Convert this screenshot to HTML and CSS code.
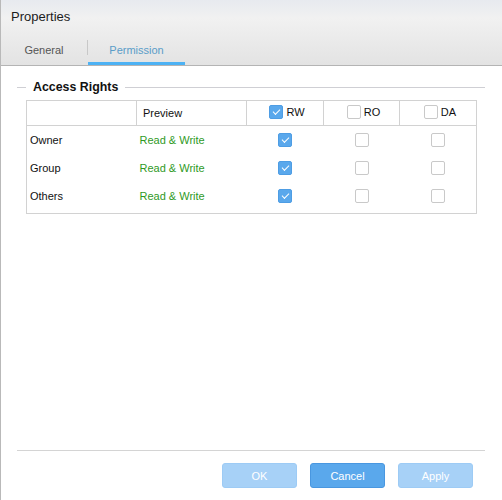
FILE: index.html
```html
<!DOCTYPE HTML>
<html lang="en">
<head>
  <meta charset="UTF-8">
  <meta name="viewport" content="width=device-width, initial-scale=1.0">
  <title>Properties</title>
  <link rel="stylesheet" href="styles.css">
</head>
<body>
  <div class="dialog">
    <!-- Title and tabs -->
    <div class="header">
      <div class="title">Properties</div>
      <div class="tabs">
        <div class="tab tab-general">General</div>
        <span class="tab-sep"></span>
        <div class="tab tab-permission active">Permission</div>
      </div>
    </div>

    <!-- Permission page -->
    <div class="content">
      <div class="legend">
        <span class="legend-line short"></span>
        <span class="legend-text">Access Rights</span>
        <span class="legend-line long"></span>
      </div>
      <table class="rights">
        <colgroup>
          <col class="col-name">
          <col class="col-preview">
          <col class="col-rw">
          <col class="col-ro">
          <col class="col-da">
        </colgroup>
        <thead>
          <tr>
            <th></th>
            <th>Preview</th>
            <th class="head-cell"><span class="head-check"><span class="box checked"></span>RW</span></th>
            <th class="head-cell"><span class="head-check"><span class="box"></span>RO</span></th>
            <th class="head-cell"><span class="head-check"><span class="box"></span>DA</span></th>
          </tr>
        </thead>
        <tbody>
          <tr>
            <td>Owner</td>
            <td class="preview">Read &amp; Write</td>
            <td class="check"><span class="box checked"></span></td>
            <td class="check"><span class="box"></span></td>
            <td class="check"><span class="box"></span></td>
          </tr>
          <tr>
            <td>Group</td>
            <td class="preview">Read &amp; Write</td>
            <td class="check"><span class="box checked"></span></td>
            <td class="check"><span class="box"></span></td>
            <td class="check"><span class="box"></span></td>
          </tr>
          <tr class="last">
            <td>Others</td>
            <td class="preview">Read &amp; Write</td>
            <td class="check"><span class="box checked"></span></td>
            <td class="check"><span class="box"></span></td>
            <td class="check"><span class="box"></span></td>
          </tr>
        </tbody>
      </table>
    </div>

    <!-- Buttons -->
    <div class="footer">
      <button class="btn btn-light">OK</button>
      <button class="btn btn-primary">Cancel</button>
      <button class="btn btn-light">Apply</button>
    </div>
  </div>
</body>
</html>
```

FILE: styles.css
```css
body {
  margin: 0;
  padding: 0;
  font-family: 'Liberation Sans', Arial, sans-serif;
  color: #222;
  background: #fff;
}
.dialog {
  width: 502px;
  height: 500px;
  display: flex;
  flex-direction: column;
  box-sizing: border-box;
  border-left: 1px solid #b9b9b9;
}

/* Header */
.header {
  height: 65px;
  border-bottom: 1px solid #b4b4b4;
  background: linear-gradient(#e7eaef 0, #f1f1f1 28%, #e3e3e3 100%);
  flex-shrink: 0;
}
.title {
  height: 33px;
  line-height: 33px;
  padding-left: 10px;
  font-size: 13px;
  color: #1c1c1c;
}
.tabs {
  display: flex;
  height: 32px;
}
.tab {
  box-sizing: border-box;
  height: 32px;
  padding-top: 11px;
  line-height: 12px;
  font-size: 11px;
  text-align: center;
  color: #555;
  border-bottom: 3px solid transparent;
}
.tab-general {
  width: 86px;
}
.tab-permission {
  width: 97px;
}
.tab.active {
  color: #5a9dc8;
  border-bottom-color: #4db2f4;
}
.tab-sep {
  width: 1px;
  height: 15px;
  margin-top: 7px;
  background: #c8c8c8;
}

/* Content */
.content {
  flex: 1;
  padding: 14px 17px 0 16px;
}
.legend {
  display: flex;
  align-items: center;
  height: 14px;
}
.legend-line {
  height: 1px;
  background: #cfcfd4;
}
.legend-line.short {
  width: 9px;
}
.legend-line.long {
  flex: 1;
}
.legend-text {
  font-size: 12.4px;
  font-weight: bold;
  color: #111;
  padding: 0 7px;
}
.rights {
  width: 451px;
  margin: 6px 0 0 9px;
  border-collapse: collapse;
  border: 1px solid #d2d2d2;
  font-size: 11px;
  table-layout: fixed;
}
.col-name,
.col-preview {
  width: 110px;
}
.col-rw,
.col-da {
  width: 77px;
}
.col-ro {
  width: 76px;
}
.rights th {
  height: 24px;
  padding: 0 6px;
  font-weight: normal;
  text-align: left;
  border: 1px solid #d2d2d2;
  color: #111;
}
.rights th.head-cell {
  text-align: center;
  padding: 0 0 0 4px;
}
.head-check {
  display: inline-flex;
  align-items: center;
  gap: 3px;
}
.rights td {
  height: 28px;
  padding: 0 3px;
  color: #111;
}
.rights tr.last td {
  height: 31px;
  padding-bottom: 3px;
  box-sizing: border-box;
}
.rights td.preview {
  color: #2f9a1f;
}
.rights td.check {
  text-align: center;
  padding-left: 0;
  padding-right: 0;
}
.box {
  display: inline-block;
  vertical-align: middle;
  box-sizing: border-box;
  width: 14px;
  height: 14px;
  border: 1px solid #c9c9c9;
  border-radius: 2px;
  background: #fff;
  position: relative;
}
.box.checked {
  background: #5aa8ec;
  border-color: #4e9de4;
}
.box.checked::after {
  content: "";
  position: absolute;
  left: 3px;
  top: 3px;
  width: 6px;
  height: 3px;
  border-left: 1.3px solid #fff;
  border-bottom: 1.3px solid #fff;
  transform: rotate(-45deg);
}

/* Footer */
.footer {
  box-sizing: border-box;
  height: 50px;
  margin: 0 17px 0 16px;
  border-top: 1px solid #d4d4d4;
  display: flex;
  justify-content: flex-end;
  align-items: flex-start;
  gap: 13px;
  padding: 12px 12px 0 0;
  flex-shrink: 0;
}
.btn {
  width: 75px;
  height: 25px;
  border-radius: 3px;
  font-family: 'Liberation Sans', Arial, sans-serif;
  font-size: 11px;
  color: #fff;
  padding: 0;
  cursor: pointer;
}
.btn-light {
  background: #a7d1f7;
  border: 1px solid #9dcbf5;
}
.btn-primary {
  background: #5aa8ec;
  border: 1px solid #4997e0;
}
```
